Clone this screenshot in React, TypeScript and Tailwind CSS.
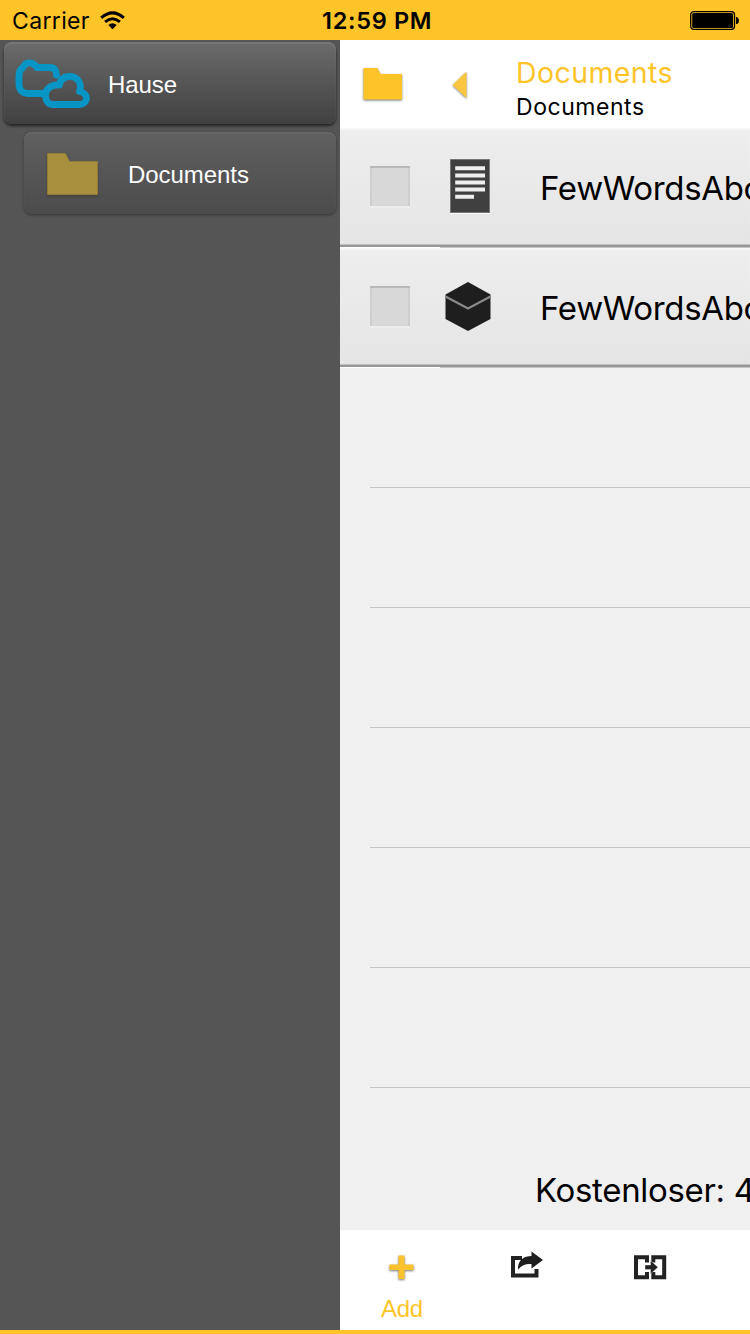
import React from "react";

const inter = "font-['Inter','Liberation_Sans',sans-serif]";
const helv = "font-['Liberation_Sans',sans-serif]";

function StatusBar() {
  return (
    <header className={`${inter} flex h-10 shrink-0 items-center bg-[#ffc427] text-black`}>
      <div className="flex w-[322px] items-center pl-3">
        <span className="w-[88px] whitespace-nowrap pt-[2px] text-[23px] leading-[38px] tracking-[0.35px]">Carrier</span>
        <svg width="25" height="20" viewBox="0 0 25 20">
          <g fill="none" stroke="#000" strokeWidth="3">
            <path d="M1.2 7.9Q12.5-2.2 23.8 7.9" />
            <path d="M5.1 11.900Q12.5 5.500 19.9 11.900" />
          </g>
          <path d="M8.3 15Q12.5 11.500 16.7 15L12.5 19.300Z" />
        </svg>
      </div>
      <span className="whitespace-nowrap pt-[2px] text-[23.5px] font-semibold leading-[38px] tracking-[0.7px]">12:59 PM</span>
      <svg className="ml-auto mr-[10px]" width="50" height="20" viewBox="0 0 50 20">
        <rect x=".7" y="1.7" width="43.8" height="17.6" rx="3" fill="none" stroke="#000" strokeWidth="1.3" />
        <rect x="2.2" y="3.1" width="40.8" height="14.8" rx="1.5" />
        <path d="M46 7h1q2 1 2 3.5T47 14h-1z" />
      </svg>
    </header>
  );
}

function Sidebar() {
  return (
    <aside className={`${helv} flex w-[340px] shrink-0 flex-col bg-[#555] pt-[2px] text-[24px] text-white`}>
      <div className="ml-1 flex h-[82px] w-[332px] items-center rounded-[8px] bg-linear-to-b from-[#6b6b6b] to-[#414141] pl-[11px] shadow-[0_2px_3px_#222,inset_0_2px_1px_#777]">
        <svg className="overflow-visible" width="76" height="50" viewBox="0 0 76 50" fill="none" stroke="#0695c5" strokeWidth="6.8" strokeLinejoin="round" strokeLinecap="round">
          <path d="M41.500 17C41.500 12 39 9.500 35 9.500H22C18 3.500 10.500 3.500 8.500 9C5 11 4 14 4 18V26C4 32 7 35.500 13 35.500H28" />
          <path d="M38 46.500H63.500C74 46 74 35.500 64.500 33.500C67.500 25 62 18 54 18.500C48.500 19 45 22 44.500 27C36 26.500 30.500 31 30.500 37C30.500 43 33.500 46.500 38 46.500Z" />
        </svg>
        <span className="ml-[17px] pt-[3px] tracking-[-0.1px]">Hause</span>
      </div>
      <div className="ml-6 mt-2 flex h-[82px] w-[312px] items-center rounded-[8px] bg-linear-to-b from-[#606060] to-[#4b4b4b] pl-[23px] shadow-[0_1px_3px_#333,inset_0_2px_1px_#676767]">
        <svg className="mt-[2px] shrink-0 overflow-visible drop-shadow-[0_2px_1px_#444]" width="52" height="42">
          <path d="M.5.5H18.500L22.500 8.500H50.500V41.500H.500Z" fill="#a88f3e" stroke="#917b38" />
        </svg>
        <span className="ml-[29px] pt-[3px] tracking-[-0.05px]">Documents</span>
      </div>
    </aside>
  );
}

function Heading() {
  return (
    <div className={`${inter} flex h-[88px] shrink-0 bg-white`}>
      <svg className="ml-[23px] mt-[27px] shrink-0 overflow-visible drop-shadow-[0_1px_1px_#777]" width="40" height="34">
        <path d="M.5 1H14.500L17.500 7H39V32.500H.5Z" fill="#ffc427" />
      </svg>
      <svg className="ml-[50px] mt-[31px] shrink-0 overflow-visible drop-shadow-[0_1px_1px_#888]" width="15" height="28">
        <path d="M-.5 14L13.500 0.500V27Z" fill="#fac53f" />
      </svg>
      <div className="ml-[48px] flex flex-col">
        <span className="mt-[15px] h-9 whitespace-nowrap text-[28.5px] leading-9 tracking-[0.4px] text-[#ffc427]">Documents</span>
        <span className="h-8 whitespace-nowrap text-[23px] leading-8 tracking-[0.55px]">Documents</span>
      </div>
    </div>
  );
}

function TextFileIcon() {
  return (
    <svg width="54" height="56" viewBox="0 0 54 56">
      <rect x="6" y="55" width="40" height="1" fill="#fafafa" />
      <rect x="6.500" y="1.500" width="39" height="53" fill="#404040" stroke="#777" />
      <path d="M11.200 10.300H41M11.200 17.400H41M11.200 24.500H41M11.200 31.600H41M11.200 38.800H30" stroke="#eee" strokeWidth="4" />
    </svg>
  );
}

function BoxIcon() {
  return (
    <svg width="54" height="56" viewBox="0 0 54 56">
      <path d="M24 4L46.500 16.500V41L24 53L1.500 41V16.500Z" fill="#1e1e1e" />
      <path d="M1.500 18.500L24 30.500L46.500 18.500" fill="none" stroke="#8a8a8a" strokeWidth="2.2" />
    </svg>
  );
}

function FileRow({ icon }: { icon: React.ReactNode }) {
  return (
    <div className="flex h-[120px] shrink-0 flex-col">
      <div className="flex h-[116px] bg-linear-to-b from-[#eee] to-[#e5e5e5] shadow-[inset_0_2px_1px_#f7f7f7]">
        <div className="ml-[30px] mt-[38px] size-10 shrink-0 bg-[#d8d8d8] shadow-[inset_0_2px_0_#b9b9b9,inset_2px_0_0_#cecece,inset_-2px_0_0_#cecece,0_2px_0_#ededed]" />
        <div className="ml-[34px] mt-[30px] w-[54px] shrink-0">{icon}</div>
        <span className={`${inter} ml-[42px] mt-[38px] whitespace-nowrap text-[33px] leading-[44px] tracking-[-0.34px]`}>FewWordsAbo</span>
      </div>
      <div className="h-px bg-[#c0c0c0]" />
      <div className="h-[2px] bg-[#979797]" />
      <div className="flex h-px"><div className="w-[100px] bg-white" /><div className="flex-1 bg-[#c4c4c4]" /></div>
    </div>
  );
}

function Toolbar() {
  return (
    <nav className="flex h-[100px] shrink-0 bg-white">
      <div className="flex w-[124px] flex-col items-center">
        <svg className="mt-[25px] shrink-0 overflow-visible drop-shadow-[0_1px_1px_#777]" width="26" height="26">
          <path d="M9.500 0.500H15.500V9.500H24.500V15H15.500V24H9.500V15H0.500V9.500H9.500Z" fill="#fac22c" />
        </svg>
        <span className={`${helv} mt-[14px] text-[24px] leading-7 tracking-[-0.3px] text-[#ffc427]`}>Add</span>
      </div>
      <svg className="ml-[46px] mt-[20px] shrink-0" width="35" height="30" viewBox="0 0 35 30">
        <path d="M12 8H3V25.500H26.500V19" fill="none" stroke="#222" strokeWidth="4" />
        <path d="M8 19.500C7.500 10 14 6 21.500 6V1.500L33 10L21.500 18.500V14C16 13.500 12 15 8 19.500Z" fill="#1e1e1e" />
      </svg>
      <svg className="ml-[88px] mt-[24px] shrink-0" width="34" height="27" viewBox="0 0 34 27">
        <path d="M14 8.500V3.200H3V23.300H14V18M20.300 8.500V3.200H31.200V23.300H20.300V18" fill="none" stroke="#222" strokeWidth="4" />
        <path d="M12 11H17.500V6.500L25 13.200L17.500 20V15.500H12Z" fill="#222" stroke="#fff" strokeWidth=".4" />
      </svg>
    </nav>
  );
}

export default function App() {
  return (
    <div className="flex h-[1334px] w-[750px] flex-col overflow-hidden bg-[#f0f0f0] text-black">
      <StatusBar />
      <div className="flex h-[1290px] min-h-0">
        <Sidebar />
        <main className="flex w-[410px] flex-col overflow-hidden">
          <Heading />
          <FileRow icon={<TextFileIcon />} />
          <FileRow icon={<BoxIcon />} />
          {[0, 1, 2, 3, 4, 5].map((i) => (
            <div key={i} className="ml-[30px] h-[120px] shrink-0 border-b border-[#c5c5c8]" />
          ))}
          <div className={`${inter} flex min-h-0 flex-1 items-end pb-[16px] pl-[195px]`}>
            <span className="whitespace-nowrap text-[33px] leading-[48px] tracking-[-0.32px]">Kostenloser: 4</span>
          </div>
          <Toolbar />
        </main>
      </div>
      <div className="h-1 shrink-0 bg-[#ffc427]" />
    </div>
  );
}
